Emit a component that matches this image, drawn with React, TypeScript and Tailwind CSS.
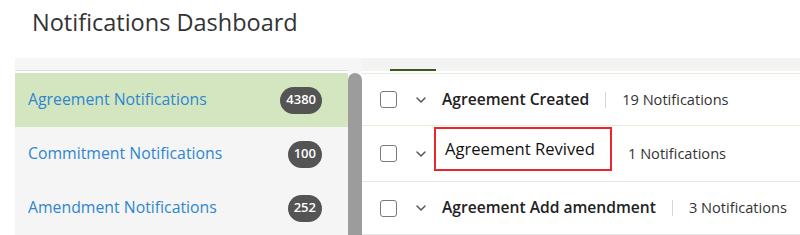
import { ChevronDown } from "lucide-react";

const sideItems = [
  { label: "Agreement Notifications", count: "4380", active: true },
  { label: "Commitment Notifications", count: "100", active: false },
  { label: "Amendment Notifications", count: "252", active: false },
];

function Checkbox() {
  return <div className="w-[17px] h-[17px] rounded-[3px] border-[1.5px] border-[#7a7a7a] bg-white shrink-0" />;
}

export default function App() {
  return (
    <div className="w-[800px] h-[235px] bg-white overflow-hidden" style={{ fontFamily: '"Open Sans", sans-serif' }}>
      {/* header */}
      <div className="h-[58px] pl-[32px] pt-[6px]">
        <h1 className="text-[23.5px] text-[#333] leading-[32px]">Notifications Dashboard</h1>
      </div>

      <div className="flex ml-[15px] h-[177px]">
        {/* sidebar */}
        <div className="w-[333px] flex flex-col">
          <div className="h-[13px] bg-[#f6f6f6] border-b border-[#dedede]" />
          <div className="h-[2px] bg-white" />
          {sideItems.map((item) => (
            <div
              key={item.label}
              className={`h-[54px] flex items-center justify-between pl-[13px] pr-[26px] ${
                item.active ? "bg-[#d3e6bf]" : "bg-[#f5f5f5]"
              }`}
            >
              <span className="text-[15.8px] text-[#2f86cf]">{item.label}</span>
              <span className="h-[27px] min-w-[34px] px-[6px] rounded-full bg-[#545454] text-white text-[13px] font-semibold flex items-center justify-center">
                {item.count}
              </span>
            </div>
          ))}
        </div>

        {/* scrollbar */}
        <div className="w-[14px] flex flex-col">
          <div className="h-[15px] bg-[#f6f6f6]" />
          <div className="flex-1 bg-[#9c9c9c] rounded-t-full" />
        </div>

        {/* main panel */}
        <div className="flex-1 flex flex-col">
          <div className="h-[13px] bg-[#f3f3f3] relative">
            <div className="absolute left-[28px] bottom-0 w-[46px] h-[2px] bg-[#3d5a1e]" />
          </div>
          <div className="h-[2px]" />

          {/* row 1 */}
          <div className="h-[53px] flex items-center pl-[18px] border-t border-b border-[#e4eedb]">
            <Checkbox />
            <ChevronDown className="w-[16px] h-[16px] text-[#555] ml-[16px]" strokeWidth={2.2} />
            <span className="ml-[13px] text-[15.6px] font-semibold text-[#222]">Agreement Created</span>
            <span className="mx-[16px] w-px h-[16px] bg-[#d6d6d6]" />
            <span className="text-[14.6px] text-[#333]">19 Notifications</span>
          </div>

          {/* row 2 */}
          <div className="h-[56px] flex items-center pl-[18px] border-b border-[#e6e6e6]">
            <Checkbox />
            <ChevronDown className="w-[16px] h-[16px] text-[#555] ml-[16px]" strokeWidth={2.2} />
            <span className="ml-[5px] mb-[9px] h-[44px] w-[178px] border-2 border-[#e8262b] flex items-center pl-[9px] text-[16.6px] text-[#111]">
              Agreement Revived
            </span>
            <span className="ml-[16px] text-[14.6px] text-[#333]">1 Notifications</span>
          </div>

          {/* row 3 */}
          <div className="h-[53px] flex items-center pl-[18px] border-b border-[#e6e6e6]">
            <Checkbox />
            <ChevronDown className="w-[16px] h-[16px] text-[#555] ml-[16px]" strokeWidth={2.2} />
            <span className="ml-[13px] text-[15.6px] font-semibold text-[#222]">Agreement Add amendment</span>
            <span className="mx-[16px] w-px h-[16px] bg-[#d6d6d6]" />
            <span className="text-[14.6px] text-[#333]">3 Notifications</span>
          </div>
        </div>
      </div>
    </div>
  );
}
